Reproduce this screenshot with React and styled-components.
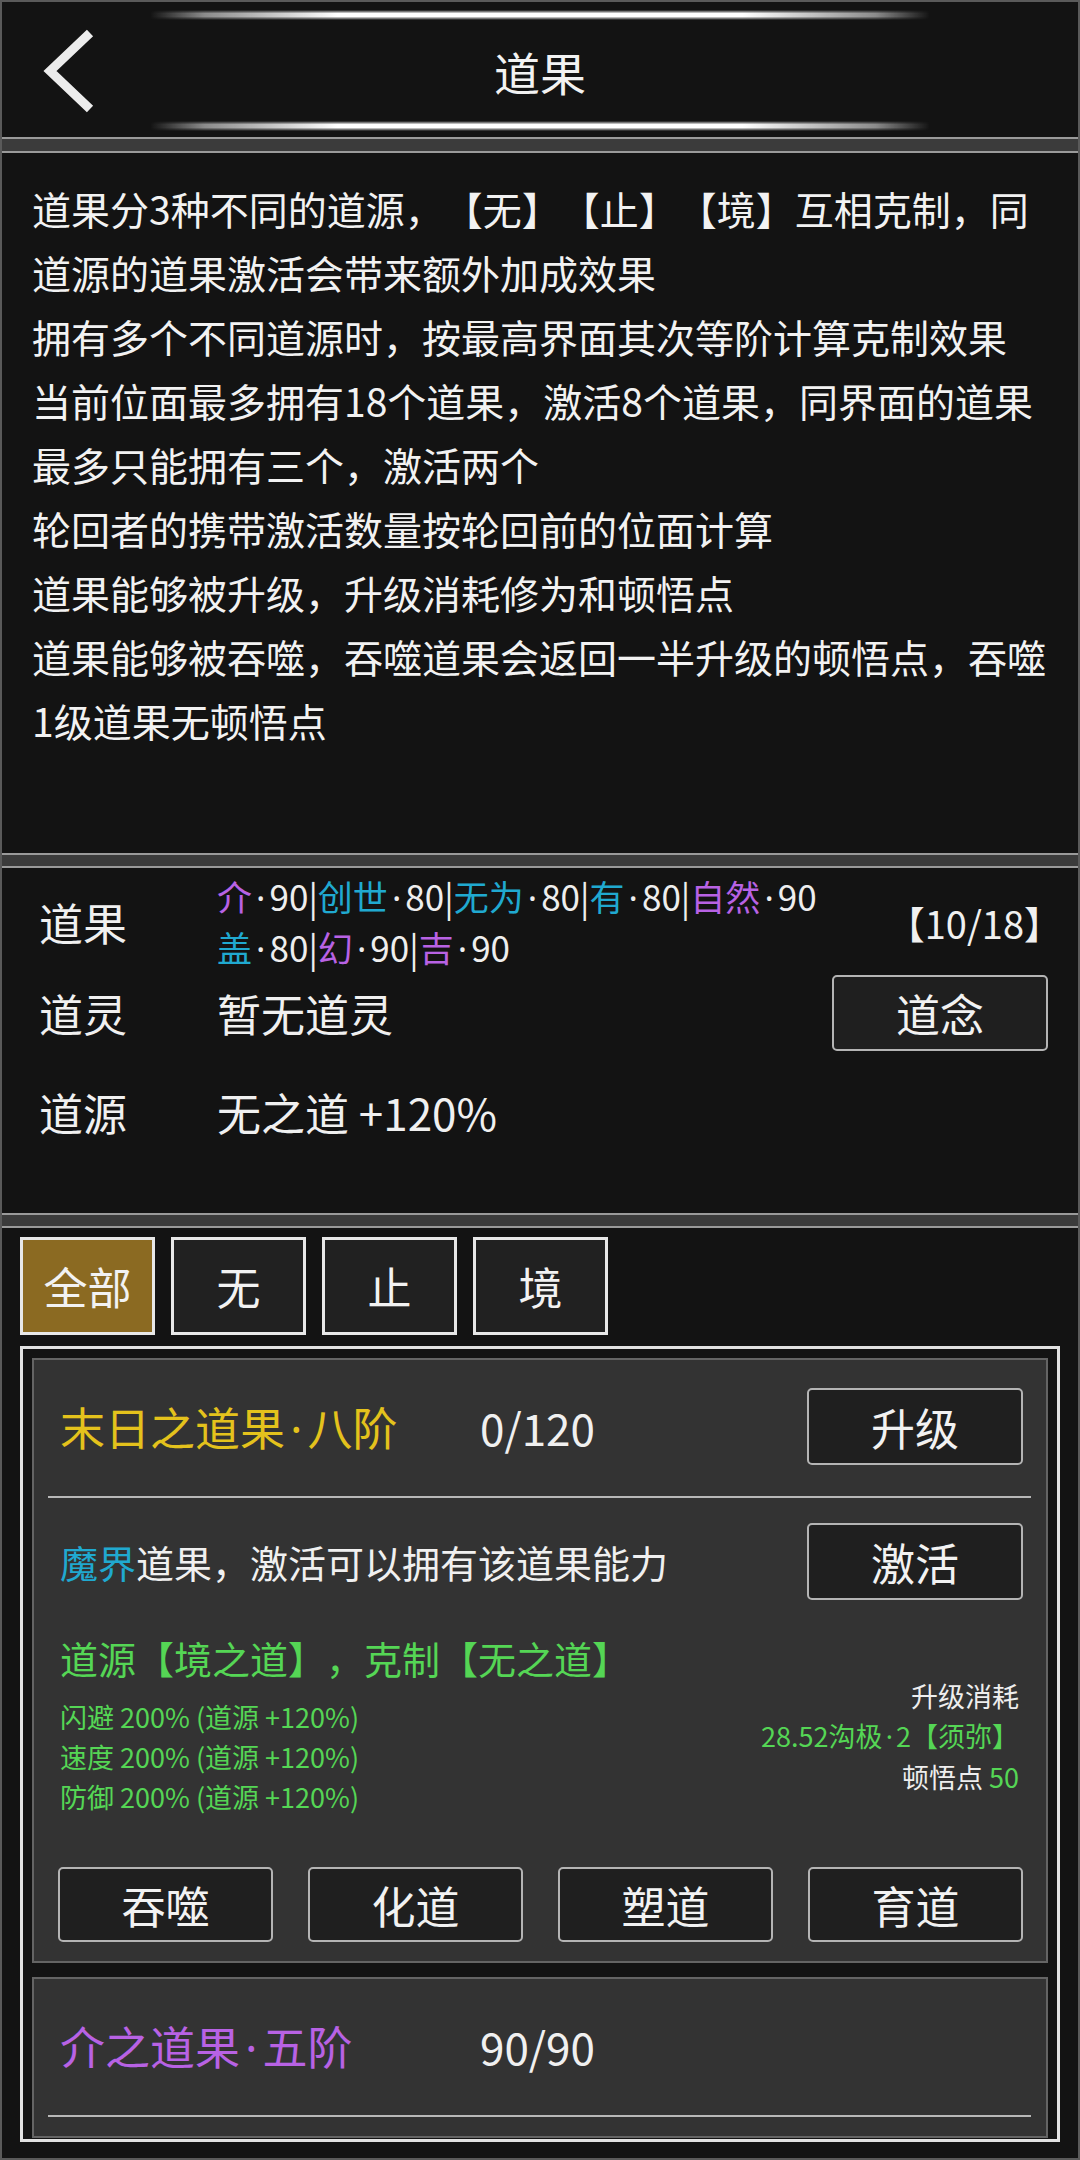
import React from "react";
import styled, { createGlobalStyle } from "styled-components";

const GlobalStyle = createGlobalStyle`
  html, body {
    margin: 0;
    padding: 0;
    background: #131313;
  }
  * {
    box-sizing: border-box;
  }
  body {
    font-family: "Noto Sans CJK SC", "Noto Sans", sans-serif;
    color: #f0f0f0;
    text-spacing-trim: space-all;
  }
`;

const PURPLE = "#b862e4";
const CYAN = "#20a9d0";
const GREEN = "#55d655";
const YELLOW = "#e4c21c";

const Screen = styled.div`
  width: 1080px;
  height: 2160px;
  border: 2px solid #5a5a5a;
  background: #131313;
  display: flex;
  flex-direction: column;
  overflow: hidden;
`;

const Header = styled.header`
  flex-shrink: 0;
  height: 135px;
  padding: 8px 0 6px;
  display: flex;
  flex-direction: column;
`;

const Glow = styled.div`
  width: 780px;
  height: 10px;
  margin: 0 auto;
  background: linear-gradient(
    90deg,
    rgba(255, 255, 255, 0) 0%,
    rgba(220, 220, 220, 0.6) 7%,
    #ffffff 24%,
    #ffffff 76%,
    rgba(220, 220, 220, 0.6) 93%,
    rgba(255, 255, 255, 0) 100%
  );
  -webkit-mask-image: linear-gradient(180deg, transparent 0%, #000 35%, #000 65%, transparent 100%);
  mask-image: linear-gradient(180deg, transparent 0%, #000 35%, #000 65%, transparent 100%);
`;

const TitleRow = styled.div`
  flex: 1;
  display: grid;
  grid-template-columns: 1fr auto 1fr;
  align-items: center;
`;

const BackButton = styled.button`
  justify-self: start;
  display: flex;
  padding: 0 0 0 38px;
  border: 0;
  background: none;
  cursor: pointer;
`;

const Title = styled.h1`
  margin: 0;
  font-size: 46px;
  font-weight: 400;
  line-height: 1;
  color: #f2f2f2;
`;

const Bar = styled.div`
  flex-shrink: 0;
  height: ${(p) => p.$h || 15}px;
  background: #3b3b3b;
  border-top: 2px solid #9a9a9a;
  border-bottom: 2px solid #9a9a9a;
`;

const Notes = styled.section`
  flex-shrink: 0;
  height: 700px;
  padding: 23px 0 0 30px;
  font-size: 39px;
  line-height: 64px;
  color: #f2f2f2;
`;

const NoteLine = styled.div`
  white-space: nowrap;
`;

const Info = styled.section`
  flex-shrink: 0;
  height: 345px;
  padding: 3px 16px 0 37px;
  display: flex;
  flex-direction: column;
`;

const InfoRow = styled.div`
  display: flex;
  align-items: center;
  min-height: ${(p) => p.$h}px;
  margin-top: ${(p) => p.$mt || 0}px;
`;

const Label = styled.div`
  width: 178px;
  flex-shrink: 0;
  font-size: 44px;
  color: #f0f0f0;
`;

const Value = styled.div`
  flex: 1;
  font-size: 44px;
  color: #f0f0f0;
`;

const Fruits = styled.div`
  flex: 1;
  font-size: 35px;
  line-height: 49px;
  color: #eeeeee;
  white-space: nowrap;
`;

const Tag = styled.span`
  color: ${(p) => p.$c};
`;

const Dot = styled.span`
  display: inline-block;
  width: 0.5em;
  text-align: center;
  font-family: "Noto Sans", "DejaVu Sans", sans-serif;
`;

const Count = styled.div`
  font-size: 38px;
  color: #f0f0f0;
`;

const Button = styled.button`
  flex-shrink: 0;
  width: ${(p) => (p.$w ? `${p.$w}px` : "auto")};
  height: ${(p) => p.$h || 77}px;
  margin-left: ${(p) => (p.$push ? "auto" : "0")};
  margin-right: ${(p) => p.$mr || 0}px;
  padding: 0;
  border: 2px solid #b4b4b4;
  border-radius: 5px;
  background: #1f1f1f;
  color: #f2f2f2;
  font-family: inherit;
  font-size: 44px;
  line-height: 1;
  cursor: pointer;
`;

const Tabs = styled.nav`
  flex-shrink: 0;
  display: flex;
  gap: 16px;
  padding: 9px 18px 11px;
`;

const Tab = styled.button`
  width: 135px;
  height: 98px;
  padding: 0;
  border: 3px solid #e8e8e8;
  background: ${(p) => (p.$active ? "#8b6a22" : "#212121")};
  color: #f2f2f2;
  font-family: inherit;
  font-size: 44px;
  cursor: pointer;
`;

const List = styled.div`
  flex: 1;
  min-height: 0;
  margin: 0 18px 16px;
  padding: 9px;
  border: 3px solid #e2e2e2;
  display: flex;
  flex-direction: column;
  gap: 14px;
  overflow: hidden;
`;

const Card = styled.article`
  flex-shrink: 0;
  background: #333333;
  border: 2px solid #646464;
  padding: 28px 0 19px;
`;

const CardRow = styled.div`
  display: flex;
  align-items: center;
  height: 77px;
  margin-top: ${(p) => p.$mt || 0}px;
  padding: 0 23px 0 26px;
`;

const FruitName = styled.div`
  width: 420px;
  flex-shrink: 0;
  font-size: 45px;
  color: ${(p) => p.$c};
`;

const Progress = styled.div`
  font-size: 44px;
  color: #f0f0f0;
`;

const Desc = styled.div`
  font-size: 38px;
  color: #f0f0f0;
`;

const Rule = styled.div`
  height: 2px;
  margin: 31px 15px 0 14px;
  background: #b8b8b8;
`;

const Effects = styled.div`
  display: flex;
  justify-content: space-between;
  margin-top: 33px;
  padding: 0 27px 0 26px;
`;

const EffectMain = styled.div`
  display: flex;
  flex-direction: column;
`;

const EffectHead = styled.div`
  font-size: 38px;
  line-height: 50px;
  color: ${GREEN};
  margin-bottom: 14px;
  white-space: nowrap;
`;

const Small = styled.div`
  font-size: 27px;
  line-height: 40px;
  color: ${(p) => p.$c || "#eeeeee"};
  white-space: nowrap;
`;

const Cost = styled.div`
  padding-top: 43px;
  text-align: right;
`;

const ButtonGrid = styled.div`
  display: grid;
  grid-template-columns: repeat(4, 1fr);
  gap: 35px;
  margin-top: 50px;
  padding: 0 23px 0 24px;
`;

const notes = [
  "道果分3种不同的道源，【无】【止】【境】互相克制，同",
  "道源的道果激活会带来额外加成效果",
  "拥有多个不同道源时，按最高界面其次等阶计算克制效果",
  "当前位面最多拥有18个道果，激活8个道果，同界面的道果",
  "最多只能拥有三个，激活两个",
  "轮回者的携带激活数量按轮回前的位面计算",
  "道果能够被升级，升级消耗修为和顿悟点",
  "道果能够被吞噬，吞噬道果会返回一半升级的顿悟点，吞噬",
  "1级道果无顿悟点",
];

const fruitLines = [
  [
    ["介", PURPLE, "90"],
    ["创世", CYAN, "80"],
    ["无为", CYAN, "80"],
    ["有", CYAN, "80"],
    ["自然", PURPLE, "90"],
  ],
  [
    ["盖", CYAN, "80"],
    ["幻", PURPLE, "90"],
    ["吉", PURPLE, "90"],
  ],
];

const tabs = ["全部", "无", "止", "境"];
const stats = ["闪避", "速度", "防御"];
const actions = ["吞噬", "化道", "塑道", "育道"];

function BackIcon() {
  return (
    <svg width="56" height="84" viewBox="0 0 56 84">
      <polyline
        points="50,4 10,42 50,80"
        fill="none"
        stroke="#ececec"
        strokeWidth="9"
        strokeLinejoin="miter"
      />
    </svg>
  );
}

export default function App() {
  return (
    <>
      <GlobalStyle />
      <Screen>
        <Header>
          <Glow />
          <TitleRow>
            <BackButton aria-label="返回">
              <BackIcon />
            </BackButton>
            <Title>道果</Title>
            <span />
          </TitleRow>
          <Glow />
        </Header>
        <Bar $h={16} />

        <Notes>
          {notes.map((line) => (
            <NoteLine key={line}>{line}</NoteLine>
          ))}
        </Notes>
        <Bar />

        <Info>
          <InfoRow $h={98}>
            <Label>道果</Label>
            <Fruits>
              {fruitLines.map((line, i) => (
                <div key={i}>
                  {line.map(([name, color, lv], j) => (
                    <React.Fragment key={name}>
                      {j > 0 && "|"}
                      <Tag $c={color}>{name}</Tag>
                      <Dot>·</Dot>
                      {lv}
                    </React.Fragment>
                  ))}
                </div>
              ))}
            </Fruits>
            <Count>【10/18】</Count>
          </InfoRow>
          <InfoRow $h={76} $mt={2}>
            <Label>道灵</Label>
            <Value>暂无道灵</Value>
            <Button $w={216} $h={76} $mr={14}>
              道念
            </Button>
          </InfoRow>
          <InfoRow $h={76} $mt={23}>
            <Label>道源</Label>
            <Value>无之道 +120%</Value>
          </InfoRow>
        </Info>
        <Bar />

        <Tabs>
          {tabs.map((t, i) => (
            <Tab key={t} $active={i === 0}>
              {t}
            </Tab>
          ))}
        </Tabs>

        <List>
          <Card>
            <CardRow>
              <FruitName $c={YELLOW}>
                末日之道果<Dot>·</Dot>八阶
              </FruitName>
              <Progress>0/120</Progress>
              <Button $w={216} $push>
                升级
              </Button>
            </CardRow>
            <Rule />
            <CardRow $mt={25}>
              <Desc>
                <Tag $c={CYAN}>魔界</Tag>道果，激活可以拥有该道果能力
              </Desc>
              <Button $w={216} $push>
                激活
              </Button>
            </CardRow>
            <Effects>
              <EffectMain>
                <EffectHead>道源【境之道】，克制【无之道】</EffectHead>
                {stats.map((s) => (
                  <Small key={s} $c={GREEN}>
                    {s} 200% (道源 +120%)
                  </Small>
                ))}
              </EffectMain>
              <Cost>
                <Small>升级消耗</Small>
                <Small $c={GREEN}>
                  28.52沟极<Dot>·</Dot>2【须弥】
                </Small>
                <Small>
                  顿悟点 <Tag $c={GREEN}>50</Tag>
                </Small>
              </Cost>
            </Effects>
            <ButtonGrid>
              {actions.map((a) => (
                <Button key={a} $h={75}>
                  {a}
                </Button>
              ))}
            </ButtonGrid>
          </Card>

          <Card>
            <CardRow>
              <FruitName $c={PURPLE}>
                介之道果<Dot>·</Dot>五阶
              </FruitName>
              <Progress>90/90</Progress>
            </CardRow>
            <Rule />
          </Card>
        </List>
      </Screen>
    </>
  );
}
